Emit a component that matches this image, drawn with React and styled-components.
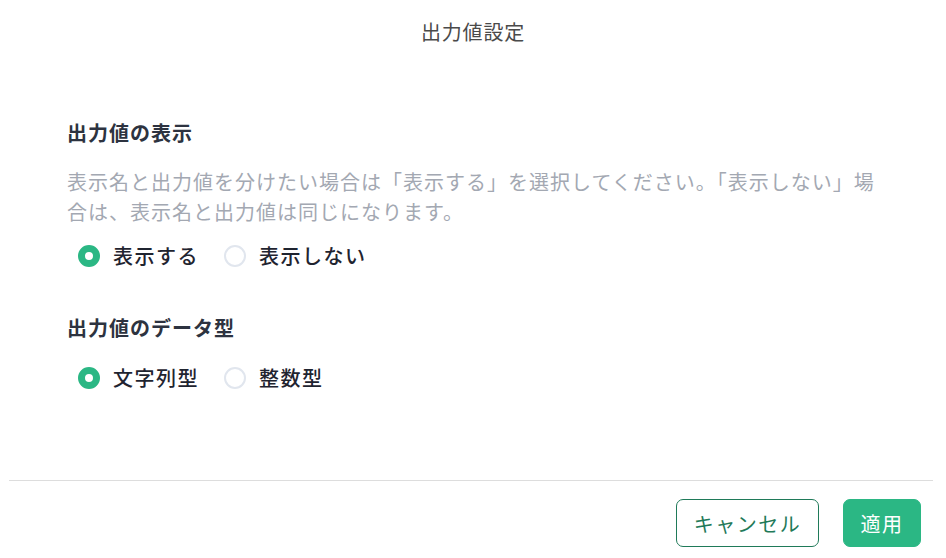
import { useState } from "react";
import styled, { createGlobalStyle } from "styled-components";

const GlobalStyle = createGlobalStyle`
    html, body {
        margin: 0;
        padding: 0;
        background: #ffffff;
    }
    body {
        font-family: "Noto Sans CJK JP", "Noto Sans", sans-serif;
    }
`

const Modal = styled.div`
    width: 946px;
    height: 558px;
    display: flex;
    flex-direction: column;
    background: #ffffff;
`
const Title = styled.h1`
    margin: 0;
    padding-top: 18px;
    height: 28px;
    line-height: 28px;
    text-align: center;
    font-size: 20px;
    font-weight: 400;
    color: #4a4a4a;
    letter-spacing: 0.8px;
`
const Body = styled.div`
    flex: 1;
    padding: 73px 67px 0;
    display: flex;
    flex-direction: column;
`
const Section = styled.section`
    display: flex;
    flex-direction: column;
    margin-bottom: ${(p) => p.$gap || 0}px;
`
const Heading = styled.h2`
    margin: 0;
    font-size: 20px;
    line-height: 28px;
    font-weight: 700;
    color: #2d3340;
    letter-spacing: 1px;
`
const Description = styled.p`
    margin: 20px 0 0;
    font-size: 20px;
    line-height: 30px;
    color: #a3a8b2;
    letter-spacing: 1px;
    max-width: 820px;
`
const RadioGroup = styled.div`
    display: flex;
    align-items: center;
    gap: 25px;
    margin-top: ${(p) => p.$top}px;
    padding-left: 11px;
`
const RadioLabel = styled.label`
    display: flex;
    align-items: center;
    gap: 13px;
    cursor: pointer;
    font-size: 20px;
    line-height: 28px;
    font-weight: 500;
    color: #1f2430;
    letter-spacing: 1.5px;
`
const RadioCircle = styled.span`
    width: 22px;
    height: 22px;
    box-sizing: border-box;
    border-radius: 50%;
    flex-shrink: 0;
    border: ${(p) => (p.$checked ? "7px solid #2bb784" : "2px solid #e1e6ee")};
    background: #ffffff;
`
const Footer = styled.div`
    margin: 0 13px 0 9px;
    border-top: 1px solid #dddddd;
    padding: 18px 12px 11px 0;
    display: flex;
    justify-content: flex-end;
    gap: 24px;
`
const Button = styled.button`
    height: 48px;
    box-sizing: border-box;
    border-radius: 7px;
    font-family: "Noto Sans CJK JP", sans-serif;
    font-size: 20px;
    font-weight: 400;
    letter-spacing: 1.5px;
    cursor: pointer;
    padding: 0;
    width: ${(p) => p.$width}px;
    border: 1px solid ${(p) => (p.$primary ? "#2bb784" : "#1f7a59")};
    background: ${(p) => (p.$primary ? "#2bb784" : "#ffffff")};
    color: ${(p) => (p.$primary ? "#ffffff" : "#1f7a59")};
`

function Radio({ checked, onSelect, children }) {
    return (
        <RadioLabel onClick={onSelect}>
            <RadioCircle $checked={checked} />
            {children}
        </RadioLabel>
    )
}

export default function App() {
    const [display, setDisplay] = useState('show')
    const [dataType, setDataType] = useState('string')

    return (
        <>
            <GlobalStyle />
            <Modal>
                <Title>出力値設定</Title>
                <Body>
                    <Section $gap={44}>
                        <Heading>出力値の表示</Heading>
                        <Description>
                            表示名と出力値を分けたい場合は「表示する」を選択してください。「表示しない」場合は、表示名と出力値は同じになります。
                        </Description>
                        <RadioGroup $top={15}>
                            <Radio checked={display === 'show'} onSelect={() => setDisplay('show')}>表示する</Radio>
                            <Radio checked={display === 'hide'} onSelect={() => setDisplay('hide')}>表示しない</Radio>
                        </RadioGroup>
                    </Section>
                    <Section>
                        <Heading>出力値のデータ型</Heading>
                        <RadioGroup $top={22}>
                            <Radio checked={dataType === 'string'} onSelect={() => setDataType('string')}>文字列型</Radio>
                            <Radio checked={dataType === 'int'} onSelect={() => setDataType('int')}>整数型</Radio>
                        </RadioGroup>
                    </Section>
                </Body>
                <Footer>
                    <Button $width={143}>キャンセル</Button>
                    <Button $primary $width={78}>適用</Button>
                </Footer>
            </Modal>
        </>
    )
}
